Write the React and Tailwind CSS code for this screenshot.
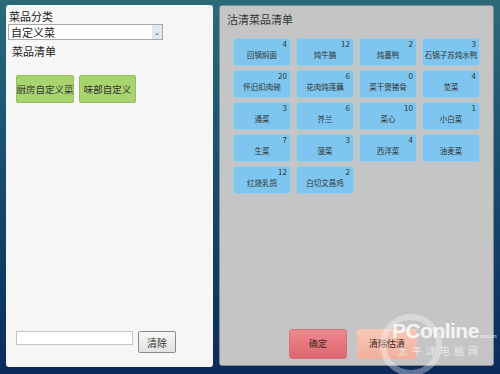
import React from "react";

const tiles = [
  ["回锅焖面", "4"], ["炖牛腩", "12"], ["炖墨鸭", "2"], ["石锅子苏炖水鸭", "3"],
  ["怀旧扣肉碗", "20"], ["花肉炖莲藕", "6"], ["菜干煲猪骨", "0"], ["苋菜", "4"],
  ["通菜", "3"], ["芥兰", "6"], ["菜心", "10"], ["小白菜", "1"],
  ["生菜", "7"], ["菠菜", "3"], ["西洋菜", "4"], ["油麦菜", ""],
  ["红烧乳鸽", "12"], ["白切文昌鸡", "2"],
];

const font = { fontFamily: '"Noto Sans CJK SC", "Noto Sans", sans-serif' };

export default function App() {
  return (
    <div
      className="w-[500px] h-[374px] flex items-start pt-[5px] pl-[6px] bg-gradient-to-b from-[#2b6b78] via-[#174a6e] to-[#0b2a5c] overflow-hidden relative"
      style={font}
    >
      {/* Left panel */}
      <div className="w-[207px] h-[362px] bg-[#f6f6f6] rounded-[3px] flex flex-col px-[2px] pt-[4px] pb-[14px] text-[#222]">
        <div className="text-[11px] leading-[14px] ml-[1px]">菜品分类</div>
        <div className="w-[155px] h-[16px] bg-white border border-[#a9a9a9] flex items-center justify-between pl-[2px] mt-[1px]">
          <span className="text-[11px] leading-[14px]">自定义菜</span>
          <span className="w-[10px] h-[14px] bg-[#dde8f5] flex items-center justify-center text-[7px] text-[#334] leading-none">⌄</span>
        </div>
        <div className="text-[11px] leading-[14px] ml-[4px] mt-[4px]">菜品清单</div>
        <div className="flex gap-[5px] ml-[8px] mt-[17px]">
          <div className="w-[58px] h-[28px] bg-[#a7d46f] border border-[#91c25d] rounded-[2px] flex items-center justify-center text-[9.5px] whitespace-nowrap text-[#333]">厨房自定义菜</div>
          <div className="w-[57px] h-[28px] bg-[#a7d46f] border border-[#91c25d] rounded-[2px] flex items-center justify-center text-[9.5px] whitespace-nowrap text-[#333]">味部自定义</div>
        </div>
        <div className="mt-auto flex items-start ml-[8px] gap-[5px]">
          <div className="w-[117px] h-[14px] bg-white border border-[#c4c4c4]"></div>
          <div className="w-[38px] h-[22px] bg-gradient-to-b from-[#f7f7f7] to-[#e2e2e2] border border-[#8a8a8a] rounded-[2px] flex items-center justify-center text-[10px] text-[#333]">清除</div>
        </div>
      </div>

      {/* Right panel */}
      <div className="ml-[6px] w-[275px] h-[361px] bg-[#c5c5c5] border border-[#7d8d91] rounded-[3px] flex flex-col pt-[6px] pb-[6px] relative">
        <div className="text-[11px] leading-[14px] text-[#333] ml-[7px]">沽清菜品清单</div>
        <div className="grid grid-cols-[repeat(4,58px)] gap-x-[5px] gap-y-[4px] ml-[13px] mt-[12px]">
          {tiles.map(([name, n], i) => (
            <div
              key={i}
              className="h-[28px] bg-[#7ec6ef] border border-[#9bcfe9] rounded-[3px] relative flex items-center justify-center pt-[6px]"
            >
              <span className="absolute top-[0px] right-[3px] text-[8px] leading-[10px] text-[#333]">{n}</span>
              <span className="text-[7.5px] leading-[10px] text-[#333] whitespace-nowrap">{name}</span>
            </div>
          ))}
        </div>
        <div className="mt-auto flex gap-[10px] ml-[69px]">
          <div className="w-[58px] h-[30px] rounded-[3px] bg-gradient-to-b from-[#ec8b90] via-[#e7767d] to-[#dd6770] border border-[#d6717a] flex items-center justify-center text-[9px] text-[#3a2222]">确定</div>
          <div className="w-[60px] h-[30px] rounded-[3px] bg-gradient-to-b from-[#f8c8b8] to-[#f0b09c] flex items-center justify-center text-[9px] text-[#3a2222]">清除估清</div>
        </div>
        {/* watermark */}
        <div className="absolute left-[160px] top-[308px] w-[62px] h-[62px] rounded-full border-[6px] border-white/35"></div>
        <div className="absolute left-[172px] top-[313px] text-[21px] leading-[24px] text-white/80 font-bold tracking-tight" style={{ fontFamily: '"Liberation Sans", sans-serif' }}>
          PConline<span className="text-[6px] font-normal">.com.cn</span>
        </div>
        <div className="absolute left-[178px] top-[339px] text-[10px] leading-[11px] text-white/60 tracking-[4px]">太平洋电脑网</div>
      </div>
    </div>
  );
}
